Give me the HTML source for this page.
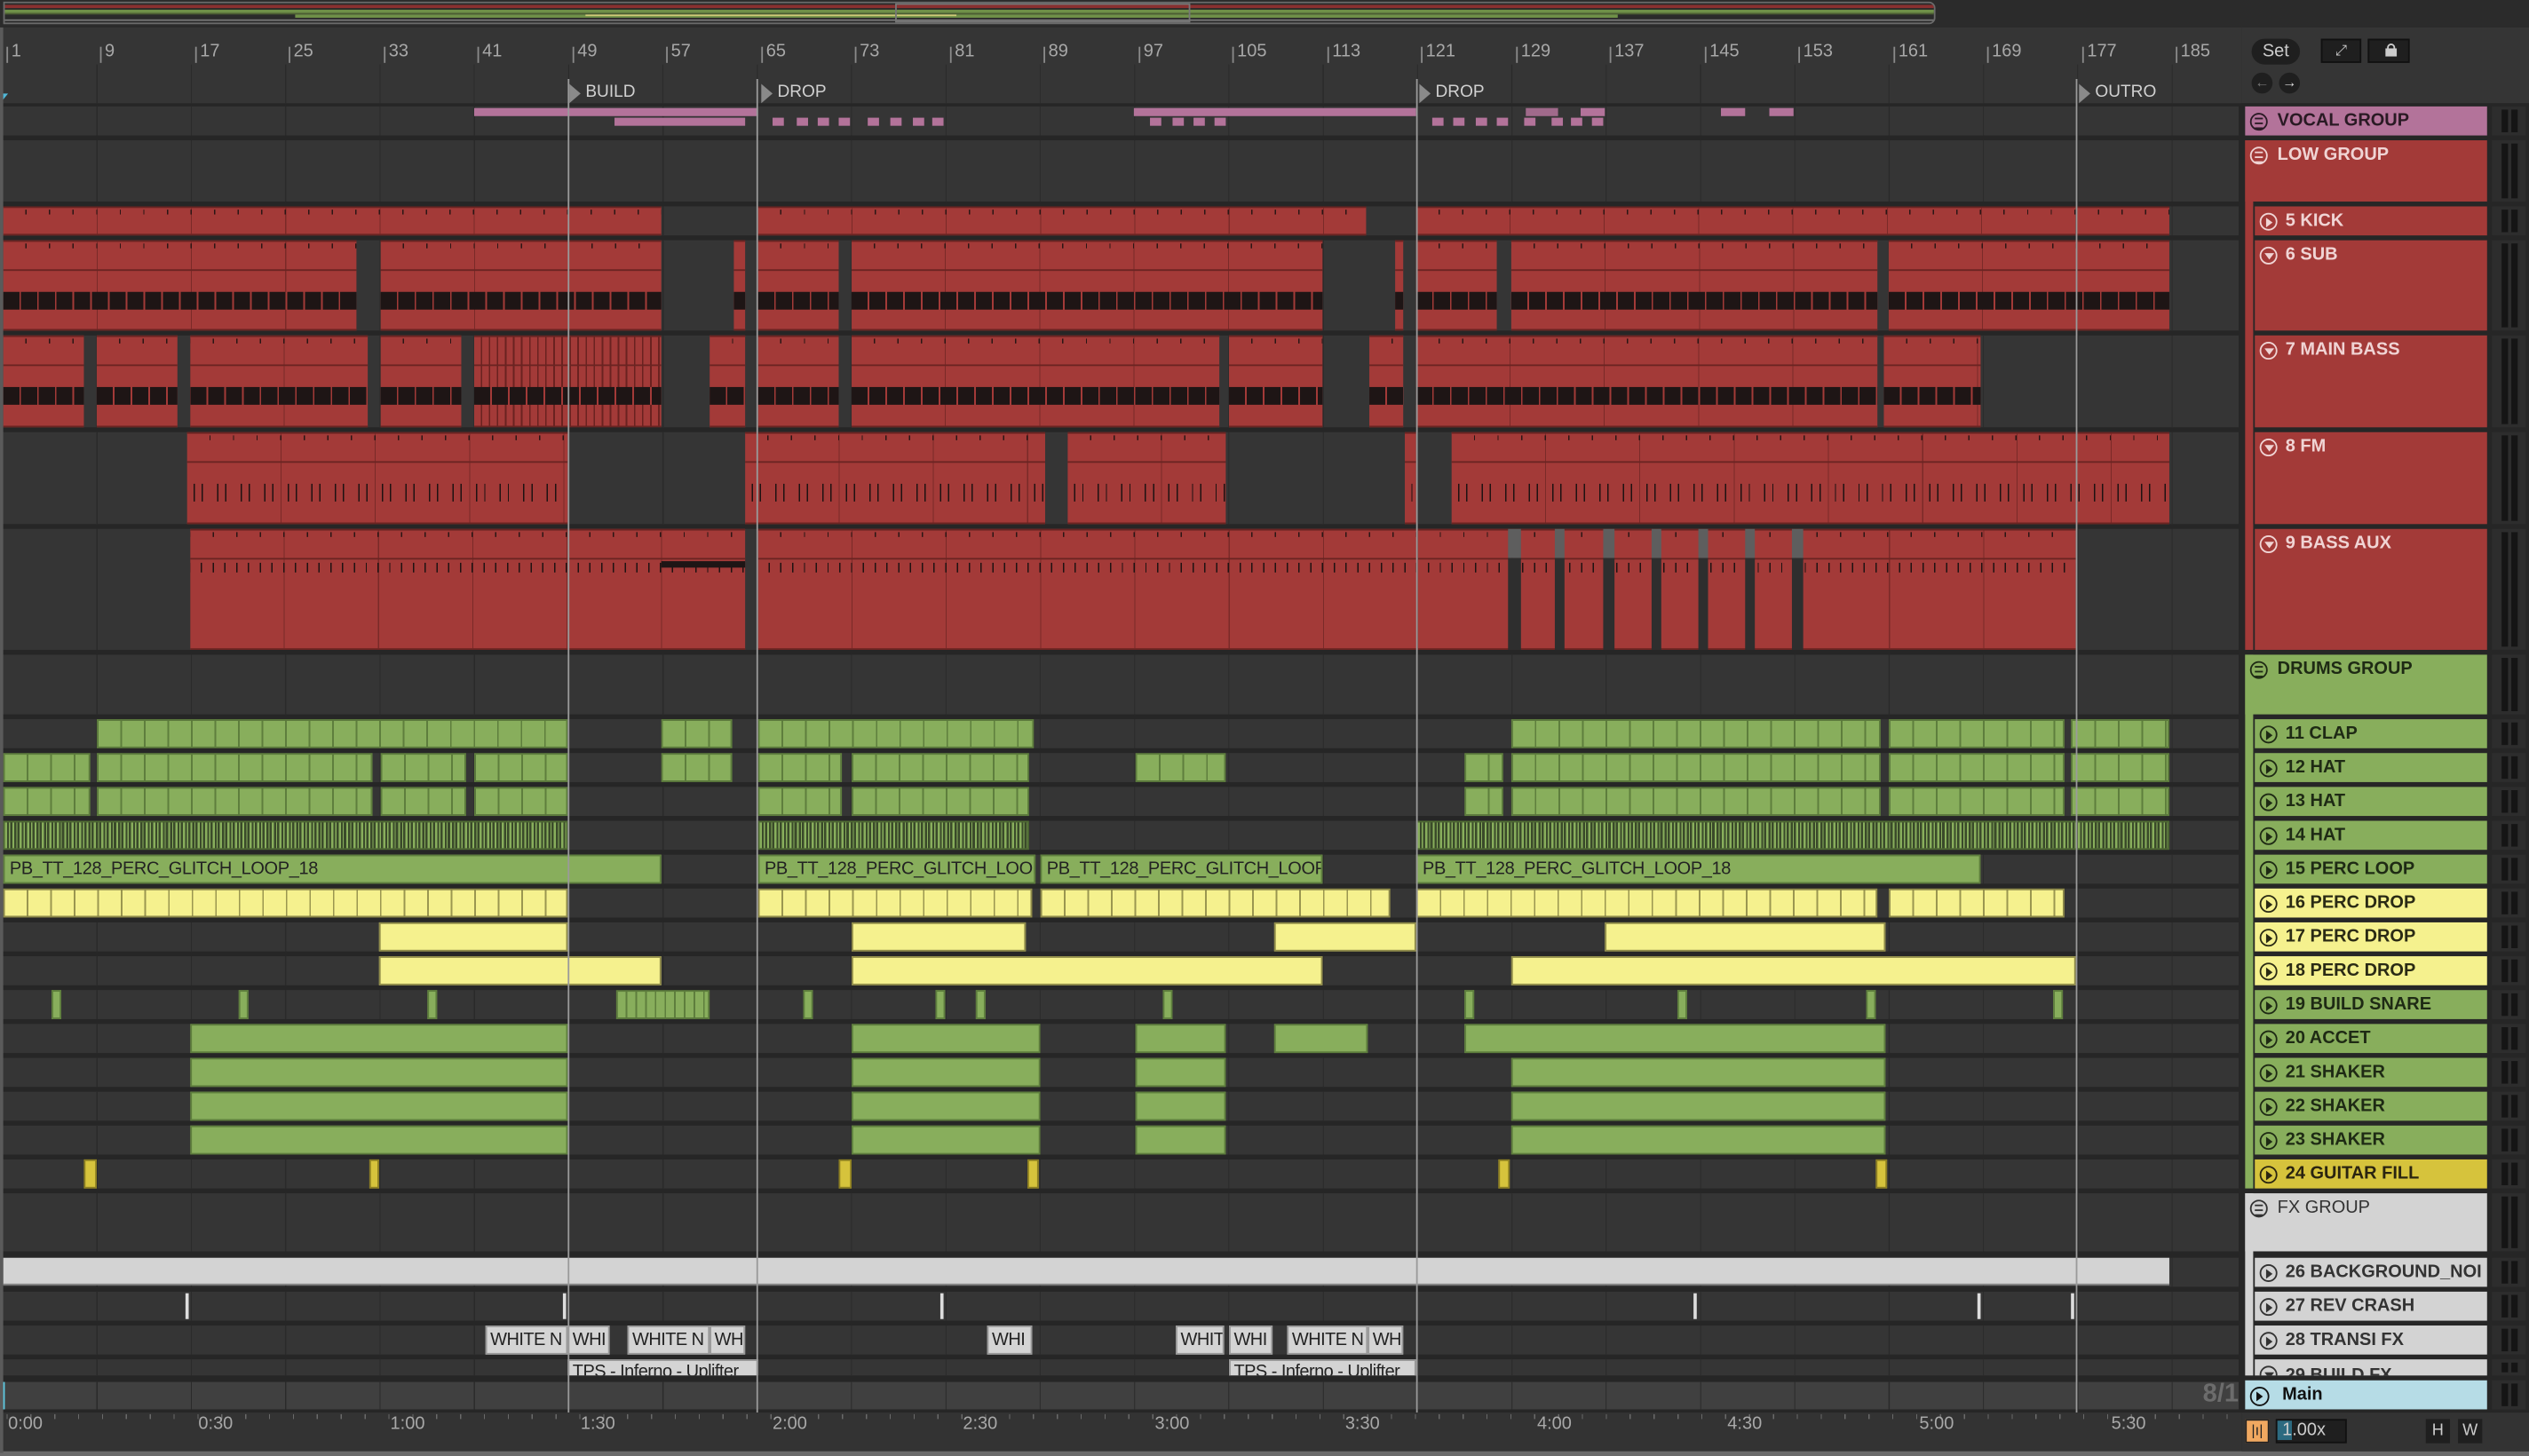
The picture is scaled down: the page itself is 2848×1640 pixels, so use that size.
<!DOCTYPE html>
<html><head><meta charset="utf-8"><style>
*{margin:0;padding:0;box-sizing:border-box}
html,body{width:2848px;height:1640px;overflow:hidden;background:#242424}
#s{position:absolute;left:0;top:0;width:1568px;height:903px;transform:scale(1.81633);transform-origin:0 0;font-family:"Liberation Sans",sans-serif;background:#262626}
.a{position:absolute}
.lane{position:absolute;left:0;width:1388px;background-color:#353535;background-image:repeating-linear-gradient(90deg,#2a2a2a 0 0.6px,transparent 0.6px 58.48px);background-position:1.4px 0}
.row{position:absolute;left:0;width:1390px}
.row>div{position:absolute;top:0;bottom:0}
.r{background:repeating-linear-gradient(90deg,transparent 0 13.8px,#2a1515 13.8px 14.6px) 0 1px/100% 3px no-repeat,repeating-linear-gradient(90deg,transparent 0 57.9px,#7a2a28 57.9px 58.48px),#a33a38;border-top:1px solid #6a2422;border-bottom:1px solid #6a2422}
.hl::before{content:"";position:absolute;left:0;right:0;top:17px;height:1px;background:#6a2422}
.band::after{content:"";position:absolute;left:0;right:0;top:31px;height:11px;background:repeating-linear-gradient(90deg,#1e1515 0 10px,#a33a38 10px 11px)}
.tk::after{content:"";position:absolute;left:0;right:0;top:31px;height:11px;background:repeating-linear-gradient(90deg,transparent 0 4px,#1e1212 4px 4.8px,transparent 4.8px 9px,#1e1212 9px 9.8px,transparent 9.8px 14.6px)}
.tk2::after{content:"";position:absolute;left:0;right:0;top:20px;height:5.5px;background:repeating-linear-gradient(90deg,transparent 0 6.5px,#1e1212 6.5px 7.3px)}
.g{background:repeating-linear-gradient(90deg,#88ae5c 0 13.6px,#5e7e3d 13.6px 14.6px);border:1px solid #5e7e3d}
.gs{background:#88ae5c;border:1px solid #5e7e3d}
.hh{background:repeating-linear-gradient(90deg,#88ae5c 0 1.3px,#3a4a2a 1.3px 2.5px,#88ae5c 2.5px 3.2px,#3a4a2a 3.2px 4.6px);border:1px solid #4e6a32}
.y{background:repeating-linear-gradient(90deg,#f5f18e 0 13.6px,#9a9650 13.6px 14.6px);border:1px solid #8f8b49}
.ys{background:#f5f18e;border:1px solid #8f8b49}
.o{background:#d6c33c;border:1px solid #8d7f22}
.p{background:#b3739a}
.w{background:#d4d4d4;border:1px solid #999;color:#222;font-size:11px;line-height:17px;padding-left:2px;overflow:hidden;white-space:nowrap;letter-spacing:-0.3px}
.lbl{font-size:11px;color:#222;line-height:17px;padding-left:3px;white-space:nowrap;overflow:hidden;letter-spacing:-0.2px}
.h{position:absolute;left:1392px;width:150px;font-weight:bold;font-size:11px;padding-left:20px;line-height:18px;white-space:nowrap;overflow:hidden}
.h.c{left:1398px;width:144px;padding-left:19px}
.ic{position:absolute;top:4px;width:11px;height:11px;border:1.2px solid currentColor;border-radius:50%;left:3px}
.ic.pl::after{content:"";position:absolute;left:3.2px;top:2px;border-left:4.5px solid currentColor;border-top:3px solid transparent;border-bottom:3px solid transparent}
.ic.dn::after{content:"";position:absolute;left:2px;top:3.2px;border-top:4.5px solid currentColor;border-left:3px solid transparent;border-right:3px solid transparent}
.ic.gr::after{content:"";position:absolute;left:2.2px;top:2.2px;width:5px;height:4.5px;border-top:1px solid currentColor;border-bottom:1px solid currentColor;background:linear-gradient(currentColor,currentColor) center/100% 1px no-repeat}
.m{position:absolute;left:1545px;width:21px;background:#2d2d2d}
.m::before,.m::after{content:"";position:absolute;top:2px;bottom:2px;width:4px;background:#151515}
.m::before{left:6px}.m::after{left:12px}
.bn{position:absolute;top:26px;font-size:11px;color:#a8a8a8}
.bn::before{content:"";position:absolute;left:-3px;top:3px;width:1px;height:10px;background:#8a8a8a}
.tm{position:absolute;top:877px;font-size:11px;color:#a8a8a8}
.loc{position:absolute;width:1px;background:#9a9a9a;top:49px;height:827px}
.mk{position:absolute;top:51px;font-size:10.5px;color:#d0d0d0}
.mk::before{content:"";position:absolute;left:-10px;top:1px;border-left:7px solid #8a8a8a;border-top:6px solid transparent;border-bottom:6px solid transparent}
</style></head><body><div id="s">

<!-- overview -->
<div class="a" style="left:0;top:0;width:1568px;height:17px;background:#2b2b2b"></div>
<div class="a" style="left:2px;top:1px;width:1198px;height:14px;border:1.5px solid #6b6b6b;border-radius:0 4px 4px 0;background:#2a2a2a;overflow:hidden">
 <div class="a" style="left:0;top:1px;width:1200px;height:2px;background:#8a3030"></div>
 <div class="a" style="left:0;top:4px;width:1200px;height:2px;background:#6f9048"></div>
 <div class="a" style="left:0;top:6px;width:1200px;height:1px;background:#4c5e34"></div>
 <div class="a" style="left:180px;top:7px;width:820px;height:2px;background:#6f9048"></div>
 <div class="a" style="left:360px;top:7px;width:230px;height:1px;background:#cfcb78"></div>
 <div class="a" style="left:0;top:10px;width:1200px;height:1px;background:#777"></div>
 <div class="a" style="left:552px;top:0;width:183px;height:12px;border:1px solid #777"></div>
</div>

<!-- ruler & locator area -->
<div class="a" style="left:0;top:17px;width:1390px;height:47px;background:#353535"></div>
<div class="a" style="left:0;top:40px;width:1390px;height:24px;background-image:repeating-linear-gradient(90deg,#2a2a2a 0 0.6px,transparent 0.6px 58.48px);background-position:1.4px 0"></div>
<div class="bn" style="left:7px">1</div><div class="bn" style="left:65px">9</div><div class="bn" style="left:124px">17</div><div class="bn" style="left:182px">25</div><div class="bn" style="left:241px">33</div><div class="bn" style="left:299px">41</div><div class="bn" style="left:358px">49</div><div class="bn" style="left:416px">57</div><div class="bn" style="left:475px">65</div><div class="bn" style="left:533px">73</div><div class="bn" style="left:592px">81</div><div class="bn" style="left:650px">89</div><div class="bn" style="left:709px">97</div><div class="bn" style="left:767px">105</div><div class="bn" style="left:826px">113</div><div class="bn" style="left:884px">121</div><div class="bn" style="left:943px">129</div><div class="bn" style="left:1001px">137</div><div class="bn" style="left:1060px">145</div><div class="bn" style="left:1118px">153</div><div class="bn" style="left:1177px">161</div><div class="bn" style="left:1235px">169</div><div class="bn" style="left:1294px">177</div><div class="bn" style="left:1352px">185</div>
<div class="a" style="left:1px;top:58px;border-top:5px solid #4fb8d8;border-right:4px solid transparent"></div>

<!-- right top -->
<div class="a" style="left:1390px;top:17px;width:178px;height:47px;background:#353535"></div>
<div class="a" style="left:1396px;top:24px;width:30px;height:16px;border-radius:8px;background:#1f1f1f;color:#ccc;font-size:11px;text-align:center;line-height:16px">Set</div>
<div class="a" style="left:1439px;top:24px;width:25px;height:15px;background:#1f1f1f;border:1px solid #111;color:#ccc;font-size:9px;text-align:center;line-height:13px">⤢</div>
<div class="a" style="left:1468px;top:24px;width:26px;height:15px;background:#1f1f1f;border:1px solid #111"><div class="a" style="left:10px;top:5px;width:7px;height:5px;background:#ccc"></div><div class="a" style="left:11px;top:2px;width:5px;height:5px;border:1.3px solid #ccc;border-radius:3px 3px 0 0"></div></div>
<div class="a" style="left:1396px;top:45px;width:13px;height:13px;border-radius:50%;background:#1f1f1f;color:#777;font-size:9px;text-align:center;line-height:13px">←</div>
<div class="a" style="left:1413px;top:45px;width:13px;height:13px;border-radius:50%;background:#1f1f1f;color:#ddd;font-size:9px;text-align:center;line-height:13px">→</div>

<!-- lanes -->
<div class="lane" style="top:66px;height:18px"></div>
<div class="lane" style="top:87px;height:38px"></div>
<div class="lane" style="top:128px;height:18px"></div>
<div class="lane" style="top:149px;height:56px"></div>
<div class="lane" style="top:208px;height:57px"></div>
<div class="lane" style="top:268px;height:57px"></div>
<div class="lane" style="top:328px;height:75px"></div>
<div class="lane" style="top:406px;height:37px"></div>
<div class="lane" style="top:446px;height:18px"></div><div class="lane" style="top:467px;height:18px"></div><div class="lane" style="top:488px;height:18px"></div><div class="lane" style="top:509px;height:18px"></div><div class="lane" style="top:530px;height:18px"></div><div class="lane" style="top:551px;height:18px"></div><div class="lane" style="top:572px;height:18px"></div><div class="lane" style="top:593px;height:18px"></div><div class="lane" style="top:614px;height:18px"></div><div class="lane" style="top:635px;height:18px"></div><div class="lane" style="top:656px;height:18px"></div><div class="lane" style="top:677px;height:18px"></div><div class="lane" style="top:698px;height:18px"></div><div class="lane" style="top:719px;height:18px"></div>
<div class="lane" style="top:740px;height:36px"></div>
<div class="lane" style="top:780px;height:18px"></div>
<div class="lane" style="top:801px;height:18px"></div>
<div class="lane" style="top:822px;height:18px"></div>
<div class="lane" style="top:843px;height:10px"></div>
<div class="lane" style="top:857px;height:17px;background-color:#404040"></div>

<!-- vocal -->
<div class="row" style="top:67px;height:5px"><div class="p" style="left:294px;width:176px"></div><div class="p" style="left:703px;width:175px"></div><div class="p" style="left:946px;width:20px;opacity:.85"></div><div class="p" style="left:980px;width:15px"></div><div class="p" style="left:1067px;width:15px"></div><div class="p" style="left:1097px;width:15px"></div></div>
<div class="row" style="top:73px;height:5px"><div class="p" style="left:381px;width:81px"></div><div class="p" style="left:479px;width:7px"></div><div class="p" style="left:494px;width:7px"></div><div class="p" style="left:507px;width:7px"></div><div class="p" style="left:520px;width:7px"></div><div class="p" style="left:538px;width:7px"></div><div class="p" style="left:552px;width:7px"></div><div class="p" style="left:566px;width:7px"></div><div class="p" style="left:578px;width:7px"></div><div class="p" style="left:713px;width:7px"></div><div class="p" style="left:727px;width:7px"></div><div class="p" style="left:740px;width:7px"></div><div class="p" style="left:753px;width:7px"></div><div class="p" style="left:888px;width:7px"></div><div class="p" style="left:901px;width:7px"></div><div class="p" style="left:915px;width:7px"></div><div class="p" style="left:928px;width:7px"></div><div class="p" style="left:945px;width:7px"></div><div class="p" style="left:962px;width:7px"></div><div class="p" style="left:974px;width:7px"></div><div class="p" style="left:987px;width:7px"></div></div>

<!-- kick -->
<div class="row" style="top:128px;height:18px"><div class="r" style="left:2px;width:408px"></div><div class="r" style="left:470px;width:377px"></div><div class="r" style="left:878px;width:467px"></div></div>
<!-- sub -->
<div class="row" style="top:149px;height:56px"><div class="r band hl" style="left:2px;width:219px"></div><div class="r band hl" style="left:236px;width:174px"></div><div class="r band hl" style="left:455px;width:7px"></div><div class="r band hl" style="left:470px;width:50px"></div><div class="r band hl" style="left:528px;width:292px"></div><div class="r band hl" style="left:865px;width:5px"></div><div class="r band hl" style="left:878px;width:50px"></div><div class="r band hl" style="left:937px;width:227px"></div><div class="r band hl" style="left:1171px;width:174px"></div></div>
<!-- main bass -->
<div class="row" style="top:208px;height:57px"><div class="r band hl" style="left:2px;width:50px"></div><div class="r band hl" style="left:60px;width:50px"></div><div class="r band hl" style="left:118px;width:110px"></div><div class="r band hl" style="left:236px;width:50px"></div><div class="r band hl" style="left:294px;width:116px;background:repeating-linear-gradient(90deg,#a33a38 0 4px,#6a2220 4px 5px)"></div><div class="r band hl" style="left:440px;width:22px"></div><div class="r band hl" style="left:470px;width:50px"></div><div class="r band hl" style="left:528px;width:228px"></div><div class="r band hl" style="left:762px;width:58px"></div><div class="r band hl" style="left:849px;width:21px"></div><div class="r band hl" style="left:878px;width:286px"></div><div class="r band hl" style="left:1168px;width:60px"></div></div>
<!-- fm -->
<div class="row" style="top:268px;height:57px"><div class="r tk hl" style="left:116px;width:236px"></div><div class="r tk hl" style="left:462px;width:186px"></div><div class="r tk hl" style="left:662px;width:98px"></div><div class="r tk hl" style="left:871px;width:7px"></div><div class="r tk hl" style="left:900px;width:445px"></div></div>
<!-- bass aux -->
<div class="row" style="top:328px;height:75px"><div class="r tk2 hl" style="left:118px;width:344px"></div><div class="r tk2 hl" style="left:470px;width:817px"></div></div>
<div class="a" style="left:410px;top:348px;width:52px;height:4px;background:#1e1515"></div>
<div class="a" style="left:935px;top:328px;width:8px;height:18px;background:#5e5e5e"></div><div class="a" style="left:935px;top:346px;width:8px;height:57px;background:#2e2e2e"></div>
<div class="a" style="left:964px;top:328px;width:6px;height:18px;background:#5e5e5e"></div><div class="a" style="left:964px;top:346px;width:6px;height:57px;background:#2e2e2e"></div>
<div class="a" style="left:994px;top:328px;width:7px;height:18px;background:#5e5e5e"></div><div class="a" style="left:994px;top:346px;width:7px;height:57px;background:#2e2e2e"></div>
<div class="a" style="left:1024px;top:328px;width:6px;height:18px;background:#5e5e5e"></div><div class="a" style="left:1024px;top:346px;width:6px;height:57px;background:#2e2e2e"></div>
<div class="a" style="left:1053px;top:328px;width:6px;height:18px;background:#5e5e5e"></div><div class="a" style="left:1053px;top:346px;width:6px;height:57px;background:#2e2e2e"></div>
<div class="a" style="left:1082px;top:328px;width:6px;height:18px;background:#5e5e5e"></div><div class="a" style="left:1082px;top:346px;width:6px;height:57px;background:#2e2e2e"></div>
<div class="a" style="left:1111px;top:328px;width:7px;height:18px;background:#5e5e5e"></div><div class="a" style="left:1111px;top:346px;width:7px;height:57px;background:#2e2e2e"></div>

<!-- 11 clap -->
<div class="row" style="top:446px;height:18px"><div class="g" style="left:60px;width:292px"></div><div class="g" style="left:410px;width:44px"></div><div class="g" style="left:470px;width:171px"></div><div class="g" style="left:937px;width:229px"></div><div class="g" style="left:1171px;width:109px"></div><div class="g" style="left:1284px;width:61px"></div></div>
<!-- 12 hat -->
<div class="row" style="top:467px;height:18px"><div class="g" style="left:2px;width:54px"></div><div class="g" style="left:60px;width:171px"></div><div class="g" style="left:236px;width:53px"></div><div class="g" style="left:294px;width:58px"></div><div class="g" style="left:410px;width:44px"></div><div class="g" style="left:470px;width:52px"></div><div class="g" style="left:528px;width:110px"></div><div class="g" style="left:704px;width:56px"></div><div class="g" style="left:908px;width:24px"></div><div class="g" style="left:937px;width:229px"></div><div class="g" style="left:1171px;width:109px"></div><div class="g" style="left:1284px;width:61px"></div></div>
<!-- 13 hat -->
<div class="row" style="top:488px;height:18px"><div class="g" style="left:2px;width:54px"></div><div class="g" style="left:60px;width:171px"></div><div class="g" style="left:236px;width:53px"></div><div class="g" style="left:294px;width:58px"></div><div class="g" style="left:470px;width:52px"></div><div class="g" style="left:528px;width:110px"></div><div class="g" style="left:908px;width:24px"></div><div class="g" style="left:937px;width:229px"></div><div class="g" style="left:1171px;width:109px"></div><div class="g" style="left:1284px;width:61px"></div></div>
<!-- 14 hat -->
<div class="row" style="top:509px;height:18px"><div class="hh" style="left:2px;width:350px"></div><div class="hh" style="left:470px;width:168px"></div><div class="hh" style="left:878px;width:467px"></div></div>
<!-- 15 perc loop -->
<div class="row" style="top:530px;height:18px"><div class="gs lbl" style="left:2px;width:408px">PB_TT_128_PERC_GLITCH_LOOP_18</div><div class="gs lbl" style="left:470px;width:172px">PB_TT_128_PERC_GLITCH_LOOP</div><div class="gs lbl" style="left:645px;width:175px">PB_TT_128_PERC_GLITCH_LOOP</div><div class="gs lbl" style="left:878px;width:350px">PB_TT_128_PERC_GLITCH_LOOP_18</div></div>
<!-- 16 -->
<div class="row" style="top:551px;height:18px"><div class="y" style="left:2px;width:350px"></div><div class="y" style="left:470px;width:170px"></div><div class="y" style="left:645px;width:217px"></div><div class="y" style="left:878px;width:286px"></div><div class="y" style="left:1171px;width:109px"></div></div>
<!-- 17 -->
<div class="row" style="top:572px;height:18px"><div class="ys" style="left:235px;width:117px"></div><div class="ys" style="left:528px;width:108px"></div><div class="ys" style="left:790px;width:88px"></div><div class="ys" style="left:995px;width:174px"></div></div>
<!-- 18 -->
<div class="row" style="top:593px;height:18px"><div class="ys" style="left:235px;width:175px"></div><div class="ys" style="left:528px;width:292px"></div><div class="ys" style="left:937px;width:350px"></div></div>
<!-- 19 -->
<div class="row" style="top:614px;height:18px"><div class="gs" style="left:32px;width:6px"></div><div class="gs" style="left:148px;width:6px"></div><div class="gs" style="left:265px;width:6px"></div><div class="g" style="left:382px;width:58px;background:repeating-linear-gradient(90deg,#88ae5c 0 5px,#5e7e3d 5px 6px)"></div><div class="gs" style="left:498px;width:6px"></div><div class="gs" style="left:580px;width:6px"></div><div class="gs" style="left:605px;width:6px"></div><div class="gs" style="left:721px;width:6px"></div><div class="gs" style="left:908px;width:6px"></div><div class="gs" style="left:1040px;width:6px"></div><div class="gs" style="left:1157px;width:6px"></div><div class="gs" style="left:1273px;width:6px"></div></div>
<!-- 20-23 -->
<div class="row" style="top:635px;height:18px"><div class="gs" style="left:118px;width:234px"></div><div class="gs" style="left:528px;width:117px"></div><div class="gs" style="left:704px;width:56px"></div><div class="gs" style="left:790px;width:58px"></div><div class="gs" style="left:908px;width:261px"></div></div>
<div class="row" style="top:656px;height:18px"><div class="gs" style="left:118px;width:234px"></div><div class="gs" style="left:528px;width:117px"></div><div class="gs" style="left:704px;width:56px"></div><div class="gs" style="left:937px;width:232px"></div></div>
<div class="row" style="top:677px;height:18px"><div class="gs" style="left:118px;width:234px"></div><div class="gs" style="left:528px;width:117px"></div><div class="gs" style="left:704px;width:56px"></div><div class="gs" style="left:937px;width:232px"></div></div>
<div class="row" style="top:698px;height:18px"><div class="gs" style="left:118px;width:234px"></div><div class="gs" style="left:528px;width:117px"></div><div class="gs" style="left:704px;width:56px"></div><div class="gs" style="left:937px;width:232px"></div></div>
<!-- 24 -->
<div class="row" style="top:719px;height:18px"><div class="o" style="left:52px;width:8px"></div><div class="o" style="left:229px;width:6px"></div><div class="o" style="left:520px;width:8px"></div><div class="o" style="left:637px;width:7px"></div><div class="o" style="left:929px;width:7px"></div><div class="o" style="left:1163px;width:7px"></div></div>
<!-- 26 -->
<div class="row" style="top:780px;height:17px"><div style="left:2px;width:1343px;background:#d3d3d3;border-bottom:1px solid #888"></div></div>
<!-- 27 -->
<div class="row" style="top:802px;height:16px"><div style="left:115px;width:2px;background:#ddd"></div><div style="left:349px;width:2px;background:#ddd"></div><div style="left:583px;width:2px;background:#ddd"></div><div style="left:1050px;width:2px;background:#ddd"></div><div style="left:1226px;width:2px;background:#ddd"></div><div style="left:1284px;width:2px;background:#ddd"></div></div>
<!-- 28 -->
<div class="row" style="top:822px;height:18px"><div class="w" style="left:301px;width:51px">WHITE N</div><div class="w" style="left:352px;width:26px">WHI</div><div class="w" style="left:389px;width:51px">WHITE N</div><div class="w" style="left:440px;width:22px">WH</div><div class="w" style="left:612px;width:28px">WHI</div><div class="w" style="left:729px;width:30px">WHIT</div><div class="w" style="left:762px;width:27px">WHI</div><div class="w" style="left:798px;width:50px">WHITE N</div><div class="w" style="left:848px;width:22px">WH</div></div>
<!-- 29 -->
<div class="row" style="top:843px;height:10px;overflow:hidden"><div class="w" style="left:352px;width:118px;line-height:15px;border-bottom:0">TPS - Inferno - Uplifter</div><div class="w" style="left:762px;width:116px;line-height:15px;border-bottom:0">TPS - Inferno - Uplifter</div></div>
<div class="a" style="left:1px;top:857px;width:2px;height:17px;background:#5ec8e0"></div>
<div class="a" style="left:1346px;top:855px;width:42px;height:20px;color:#6c6c6c;font-size:16px;font-weight:bold;text-align:right;line-height:20px">8/1</div>

<!-- locators -->
<div class="loc" style="left:352px"></div><div class="loc" style="left:469px"></div><div class="loc" style="left:878px"></div><div class="loc" style="left:1287px"></div>
<div class="mk" style="left:363px">BUILD</div><div class="mk" style="left:482px">DROP</div><div class="mk" style="left:890px">DROP</div><div class="mk" style="left:1299px">OUTRO</div>

<!-- bottom ruler -->
<div class="a" style="left:0;top:876px;width:1390px;height:25px;background:#333;background-image:repeating-linear-gradient(90deg,#6a6a6a 0 0.7px,transparent 0.7px 14.8px);background-size:100% 3px;background-repeat:no-repeat;background-position:4px 1px"></div>
<div class="tm" style="left:5px">0:00</div><div class="tm" style="left:123px">0:30</div><div class="tm" style="left:242px">1:00</div><div class="tm" style="left:360px">1:30</div><div class="tm" style="left:479px">2:00</div><div class="tm" style="left:597px">2:30</div><div class="tm" style="left:716px">3:00</div><div class="tm" style="left:834px">3:30</div><div class="tm" style="left:953px">4:00</div><div class="tm" style="left:1071px">4:30</div><div class="tm" style="left:1190px">5:00</div><div class="tm" style="left:1309px">5:30</div>
<div class="a" style="left:0;top:900px;width:1568px;height:3px;background:#6b6b6b"></div>
<div class="a" style="left:0;top:17px;width:2px;height:884px;background:#5a5a5a"></div>

<!-- headers -->
<div class="a" style="left:1390px;top:64px;width:178px;height:812px;background:#262626"></div>
<div class="a" style="left:1392px;top:87px;width:4.5px;height:316px;background:#a33a38"></div>
<div class="a" style="left:1392px;top:406px;width:4.5px;height:331px;background:#88ae5c"></div>
<div class="a" style="left:1392px;top:740px;width:4.5px;height:113px;background:#d3d3d3"></div>

<div class="h" style="top:66px;height:18px;background:#b3739a;color:#2a1a24"><span class="ic gr"></span>VOCAL GROUP</div>
<div class="h" style="top:87px;height:38px;color:#f0d4d4;background:#a33a38"><span class="ic gr"></span>LOW GROUP</div>
<div class="h c" style="top:128px;height:18px;background:#a33a38;color:#f0d4d4"><span class="ic pl"></span>5 KICK</div>
<div class="h c" style="top:149px;height:56px;background:#a33a38;color:#f0d4d4"><span class="ic dn"></span>6 SUB</div>
<div class="h c" style="top:208px;height:57px;background:#a33a38;color:#f0d4d4"><span class="ic dn"></span>7 MAIN BASS</div>
<div class="h c" style="top:268px;height:57px;background:#a33a38;color:#f0d4d4"><span class="ic dn"></span>8 FM</div>
<div class="h c" style="top:328px;height:75px;background:#a33a38;color:#f0d4d4"><span class="ic dn"></span>9 BASS AUX</div>

<div class="h" style="top:406px;height:37px;background:#88ae5c;color:#1e2a14"><span class="ic gr"></span>DRUMS GROUP</div>
<div class="h c" style="top:446px;height:18px;background:#88ae5c;color:#1e2a14"><span class="ic pl"></span>11 CLAP</div>
<div class="h c" style="top:467px;height:18px;background:#88ae5c;color:#1e2a14"><span class="ic pl"></span>12 HAT</div>
<div class="h c" style="top:488px;height:18px;background:#88ae5c;color:#1e2a14"><span class="ic pl"></span>13 HAT</div>
<div class="h c" style="top:509px;height:18px;background:#88ae5c;color:#1e2a14"><span class="ic pl"></span>14 HAT</div>
<div class="h c" style="top:530px;height:18px;background:#88ae5c;color:#1e2a14"><span class="ic pl"></span>15 PERC LOOP</div>
<div class="h c" style="top:551px;height:18px;background:#f5f18e;color:#2a2a14"><span class="ic pl"></span>16 PERC DROP</div>
<div class="h c" style="top:572px;height:18px;background:#f5f18e;color:#2a2a14"><span class="ic pl"></span>17 PERC DROP</div>
<div class="h c" style="top:593px;height:18px;background:#f5f18e;color:#2a2a14"><span class="ic pl"></span>18 PERC DROP</div>
<div class="h c" style="top:614px;height:18px;background:#88ae5c;color:#1e2a14"><span class="ic pl"></span>19 BUILD SNARE</div>
<div class="h c" style="top:635px;height:18px;background:#88ae5c;color:#1e2a14"><span class="ic pl"></span>20 ACCET</div>
<div class="h c" style="top:656px;height:18px;background:#88ae5c;color:#1e2a14"><span class="ic pl"></span>21 SHAKER</div>
<div class="h c" style="top:677px;height:18px;background:#88ae5c;color:#1e2a14"><span class="ic pl"></span>22 SHAKER</div>
<div class="h c" style="top:698px;height:18px;background:#88ae5c;color:#1e2a14"><span class="ic pl"></span>23 SHAKER</div>
<div class="h c" style="top:719px;height:18px;background:#d6c33c;color:#2a2410"><span class="ic pl"></span>24 GUITAR FILL</div>

<div class="h" style="top:740px;height:36px;background:#d3d3d3;color:#333;font-weight:normal"><span class="ic gr"></span>FX GROUP</div>
<div class="h c" style="top:780px;height:18px;background:#d3d3d3;color:#333"><span class="ic pl"></span>26 BACKGROUND_NOI</div>
<div class="h c" style="top:801px;height:18px;background:#d3d3d3;color:#333"><span class="ic pl"></span>27 REV CRASH</div>
<div class="h c" style="top:822px;height:18px;background:#d3d3d3;color:#333"><span class="ic pl"></span>28 TRANSI FX</div>
<div class="h c" style="top:843px;height:10px;background:#d3d3d3;color:#333;line-height:20px"><span class="ic dn"></span>29 BUILD FX</div>
<div class="h" style="top:856px;height:18px;background:#b6dce6;color:#111;padding-left:23px"><span class="ic pl" style="width:12px;height:12px"></span>Main</div>

<!-- meters -->
<div class="m" style="top:66px;height:18px"></div><div class="m" style="top:87px;height:38px"></div><div class="m" style="top:128px;height:18px"></div><div class="m" style="top:149px;height:56px"></div><div class="m" style="top:208px;height:57px"></div><div class="m" style="top:268px;height:57px"></div><div class="m" style="top:328px;height:75px"></div><div class="m" style="top:406px;height:37px"></div>
<div class="m" style="top:446px;height:18px"></div><div class="m" style="top:467px;height:18px"></div><div class="m" style="top:488px;height:18px"></div><div class="m" style="top:509px;height:18px"></div><div class="m" style="top:530px;height:18px"></div><div class="m" style="top:551px;height:18px"></div><div class="m" style="top:572px;height:18px"></div><div class="m" style="top:593px;height:18px"></div><div class="m" style="top:614px;height:18px"></div><div class="m" style="top:635px;height:18px"></div><div class="m" style="top:656px;height:18px"></div><div class="m" style="top:677px;height:18px"></div><div class="m" style="top:698px;height:18px"></div><div class="m" style="top:719px;height:18px"></div>
<div class="m" style="top:740px;height:36px"></div><div class="m" style="top:780px;height:18px"></div><div class="m" style="top:801px;height:18px"></div><div class="m" style="top:822px;height:18px"></div><div class="m" style="top:843px;height:10px"></div><div class="m" style="top:856px;height:18px"></div>

<!-- bottom right -->
<div class="a" style="left:1390px;top:876px;width:178px;height:24px;background:#333"></div>
<div class="a" style="left:1392px;top:880px;width:15px;height:15px;background:#f0a860;border:1px solid #222;color:#222;font-size:9px;text-align:center;line-height:13px">|ı|</div>
<div class="a" style="left:1411px;top:880px;width:44px;height:15px;background:#1f1f1f;border:1px solid #111;color:#ccc;font-size:11px;line-height:13px"><span style="background:#2c6a80;padding-left:3px">1</span>.00x</div>
<div class="a" style="left:1504px;top:880px;width:15px;height:15px;background:#1f1f1f;color:#ccc;font-size:10px;text-align:center;line-height:15px">H</div>
<div class="a" style="left:1524px;top:880px;width:15px;height:15px;background:#1f1f1f;color:#ccc;font-size:10px;text-align:center;line-height:15px">W</div>
</div></body></html>
